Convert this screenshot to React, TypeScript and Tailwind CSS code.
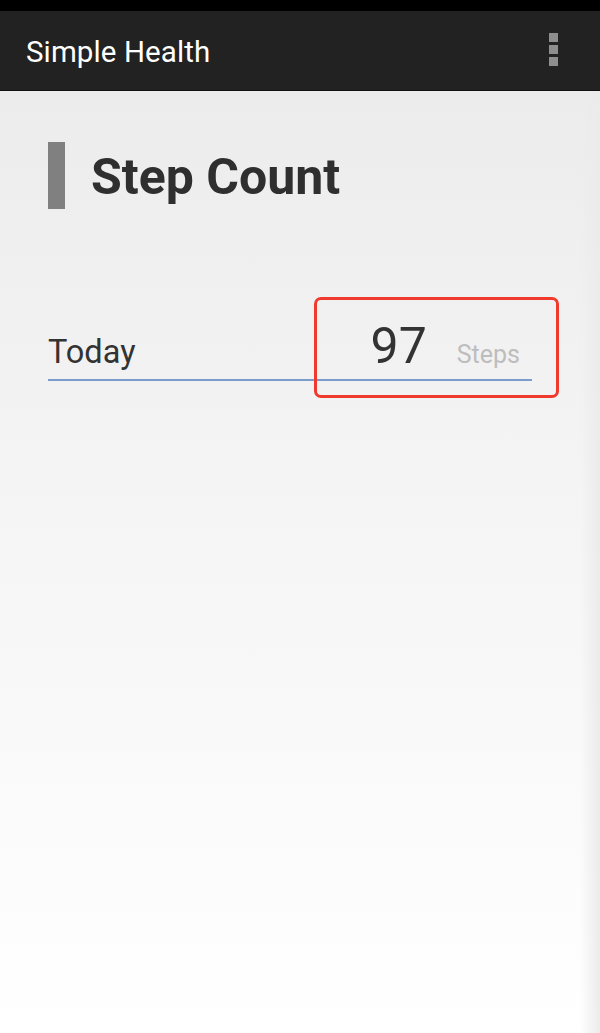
import React from "react";

export default function App() {
  return (
    <div
      className="w-[600px] h-[1033px] overflow-hidden flex flex-col"
      style={{ fontFamily: "Roboto, 'Noto Sans', sans-serif" }}
    >
      <div className="h-[11px] bg-black shrink-0" />
      <div className="h-[80px] bg-[#222222] shrink-0 flex items-center justify-between pl-[26px] pr-[42px] border-b border-[#111]">
        <span className="text-white text-[29.5px] leading-none tracking-[0.1px] mt-[5px]">Simple Health</span>
        <div className="flex flex-col gap-[3px] mt-[-3px]">
          <div className="w-[9px] h-[9px] bg-[#8e8e8e]" />
          <div className="w-[9px] h-[9px] bg-[#8e8e8e]" />
          <div className="w-[9px] h-[9px] bg-[#8e8e8e]" />
        </div>
      </div>
      <div className="flex-1 bg-gradient-to-b from-[#ececec] via-[#f6f6f6] to-[#ffffff] relative">
        <div className="absolute inset-y-0 right-0 w-[20px] bg-gradient-to-r from-transparent to-[#ebebeb]" />
        <div className="relative pl-[48px] pr-[68px]">
          <div className="flex items-center mt-[51px] h-[67px]">
            <div className="w-[17px] h-[67px] bg-[#808080]" />
            <span className="ml-[26px] text-[50px] font-bold text-[#2f2f2f] leading-none mt-[3px]">Step Count</span>
          </div>
          <div className="relative mt-[112px] border-b-2 border-[#7a9dcc] flex items-baseline pb-[8px]">
            <span className="text-[32.5px] text-[#333] leading-none">Today</span>
            <span className="ml-auto text-[50px] text-[#333] leading-none">97</span>
            <span className="ml-[30px] mr-[12px] text-[25px] text-[#bdbdbd] leading-none">Steps</span>
            <div className="absolute left-[266px] bottom-[-19px] w-[245px] h-[101px] border-[3px] border-[#f03a2e] rounded-[7px]" />
          </div>
        </div>
      </div>
    </div>
  );
}
